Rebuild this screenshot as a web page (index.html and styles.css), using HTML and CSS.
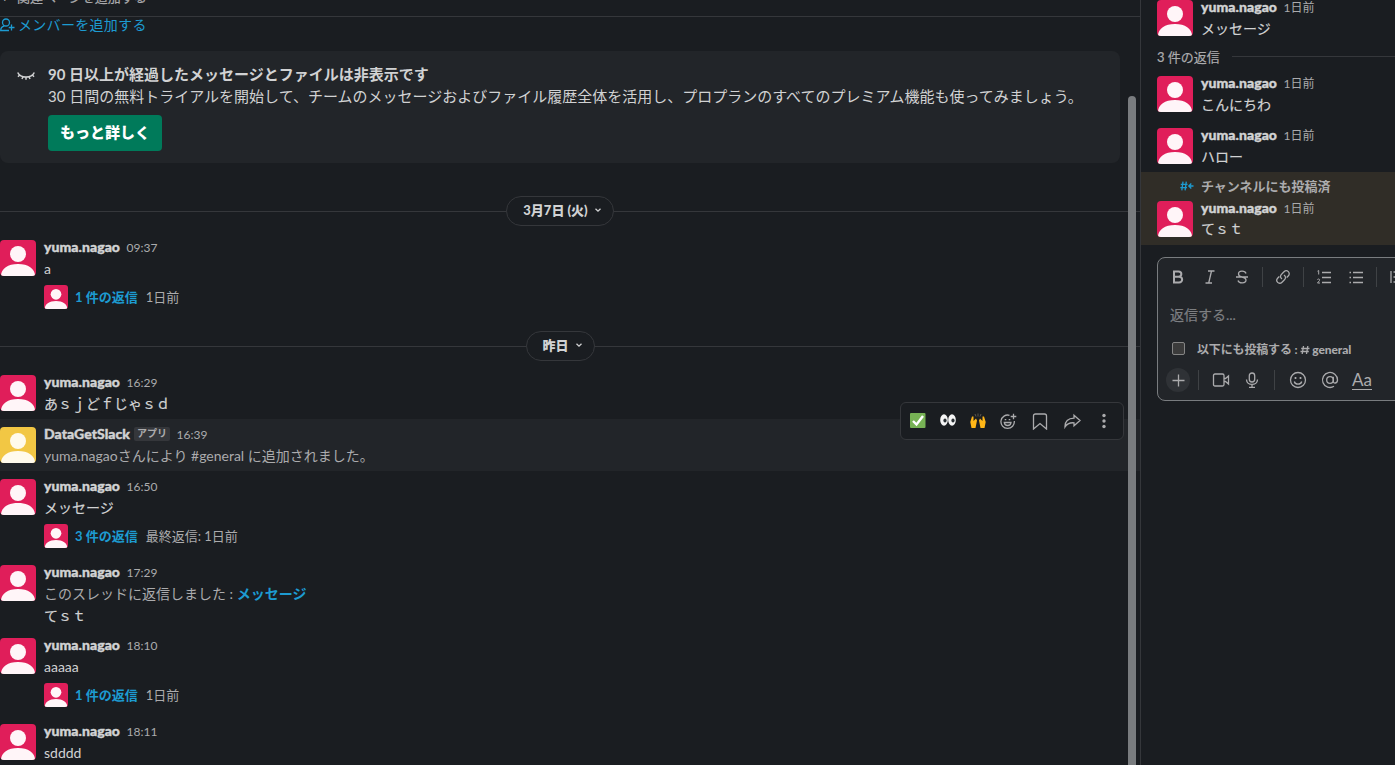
FILE: index.html
```html
<!DOCTYPE html>
<html lang="ja">
<head>
    <meta charset="UTF-8">
    <meta name="viewport" content="width=device-width, initial-scale=1.0">
    <title>general | Slack</title>
    <link rel="stylesheet" href="styles.css">
</head>
<body>
    <!-- 共通アイコン -->
    <svg class="sprite" width="0" height="0">
        <symbol id="user" viewBox="0 0 36 36">
            <circle cx="18" cy="14" r="8"/>
            <path d="M1 36C1 28.500 8 24 18 24S35 28.500 35 36z"/>
        </symbol>
        <symbol id="chevron" viewBox="0 0 8 8">
            <path d="M1.500 2.700L4 5.200L6.500 2.700"/>
        </symbol>
    </svg>

    <div class="app">
        <!-- チャンネル -->
        <main class="channel">
            <div class="bookmark"><span class="plus">+</span>関連ページを追加する</div>
            <a class="add-member">
                <svg class="icon" width="15" height="14" viewBox="0 0 15 14"><circle cx="6" cy="4.500" r="3.500"/><path d="M4.300 8C1.500 8.700 .7 10.300 .7 12.500H9M11.500 6.500V12.500M8.700 9.500H14.500"/></svg>
                <span>メンバーを追加する</span>
            </a>

            <section class="banner">
                <svg class="icon eye" width="18" height="10" viewBox="0 0 18 10"><path d="M.7 1.500C3.500 7.500 14.500 7.500 17.300 1.500M2.800 3.800L1 5.800M6 5.500L5 8M9 6V8.700M12 5.500L13 8M15.200 3.800L17 5.800"/></svg>
                <div>
                    <h2 class="t-banner-title">90 日以上が経過したメッセージとファイルは非表示です</h2>
                    <p class="t-banner">30 日間の無料トライアルを開始して、チームのメッセージおよびファイル履歴全体を活用し、プロプランのすべてのプレミアム機能も使ってみましょう。</p>
                    <button class="more">もっと詳しく</button>
                </div>
            </section>

            <div class="day"><button class="day-pill">3月7日 (火)<svg class="icon" width="8" height="8"><use href="#chevron"/></svg></button></div>

            <article class="message">
                <svg class="avatar"><use href="#user"/></svg>
                <div class="body">
                    <div class="head"><b>yuma.nagao</b><time>09:37</time></div>
                    <p>a</p>
                    <div class="replies"><svg class="avatar small"><use href="#user"/></svg><a>1 件の返信</a><span>1日前</span></div>
                </div>
            </article>

            <div class="day"><button class="day-pill">昨日<svg class="icon" width="8" height="8"><use href="#chevron"/></svg></button></div>

            <article class="message">
                <svg class="avatar"><use href="#user"/></svg>
                <div class="body">
                    <div class="head"><b>yuma.nagao</b><time>16:29</time></div>
                    <p class="kana">あｓｊどｆじゃｓｄ</p>
                </div>
            </article>

            <article class="message hovered">
                <svg class="avatar yellow"><use href="#user"/></svg>
                <div class="body">
                    <div class="head"><b>DataGetSlack</b><span class="badge">アプリ</span><time>16:39</time></div>
                    <p class="muted">yuma.nagaoさんにより #general に追加されました。</p>
                </div>

                <!-- ホバー時のアクション -->
                <div class="actions">
                    <svg width="16" height="16" viewBox="0 0 16 16"><rect width="15.500" height="15" rx="1" fill="#77b255"/><path d="M3 8L6.500 11.500L13 3" fill="none" stroke="#fff" stroke-width="2.400"/></svg>
                    <svg width="16" height="16" viewBox="0 0 16 16"><ellipse cx="4" cy="7" rx="3.800" ry="5.700" fill="#f5f5f5"/><ellipse cx="12" cy="7" rx="3.800" ry="5.700" fill="#f5f5f5"/><ellipse cx="5" cy="7.500" rx="1.600" ry="2" fill="#292f33"/><ellipse cx="13" cy="7.500" rx="1.600" ry="2" fill="#292f33"/></svg>
                    <svg width="16" height="16" viewBox="0 0 16 16"><path d="M1.500 15L.3 9L2 3.500L3.500 3.500L3.500 8L6 5.500L7 7.500L5.500 15zM14.500 15L15.700 9L14 3.500L12.500 3.500L12.500 8L10 5.500L9 7.500L10.500 15z" fill="#ffb617"/><path d="M8 .5V3.500M5 1L6 3.500M11 1L10 3.500" fill="none" stroke="#6b6459" stroke-width=".8"/></svg>
                    <svg class="icon" width="17" height="17" viewBox="0 0 17 17"><path d="M9.500 2.300A6.700 6.700 0 1 0 14.300 8M13.500 .7V6.300M10.700 3.500H16.300M4.300 9.500C4.600 13.500 10.700 13.500 11 9.500z"/><path d="M5.500 6V7.300M9.500 6V7.300" stroke-width="1.600"/></svg>
                    <svg class="icon" width="16" height="17" viewBox="0 0 16 17"><path d="M1.500 16V3Q1.500 1 3.500 1H12.500Q14.500 1 14.500 3V16L8 10.500z"/></svg>
                    <svg class="icon" width="17" height="16" viewBox="0 0 17 16"><path d="M10 2.200L16 7.500L10 12.800V9.800C5.500 9.500 3 10.500 1 14C.8 8.500 4 5.200 10 5.200z"/></svg>
                    <svg width="16" height="16" viewBox="0 0 16 16" fill="#ababad"><circle cx="8" cy="2.500" r="1.700"/><circle cx="8" cy="8" r="1.700"/><circle cx="8" cy="13.500" r="1.700"/></svg>
                </div>
            </article>

            <article class="message">
                <svg class="avatar"><use href="#user"/></svg>
                <div class="body">
                    <div class="head"><b>yuma.nagao</b><time>16:50</time></div>
                    <p class="kana">メッセージ</p>
                    <div class="replies"><svg class="avatar small"><use href="#user"/></svg><a>3 件の返信</a><span>最終返信: 1日前</span></div>
                </div>
            </article>

            <article class="message">
                <svg class="avatar"><use href="#user"/></svg>
                <div class="body">
                    <div class="head"><b>yuma.nagao</b><time>17:29</time></div>
                    <p class="muted broadcast">このスレッドに返信しました : <a>メッセージ</a></p>
                    <p class="kana">てｓｔ</p>
                </div>
            </article>

            <article class="message">
                <svg class="avatar"><use href="#user"/></svg>
                <div class="body">
                    <div class="head"><b>yuma.nagao</b><time>18:10</time></div>
                    <p>aaaaa</p>
                    <div class="replies"><svg class="avatar small"><use href="#user"/></svg><a>1 件の返信</a><span>1日前</span></div>
                </div>
            </article>

            <article class="message">
                <svg class="avatar"><use href="#user"/></svg>
                <div class="body">
                    <div class="head"><b>yuma.nagao</b><time>18:11</time></div>
                    <p>sdddd</p>
                </div>
            </article>

            <div class="scrollbar"></div>
        </main>

        <!-- スレッド -->
        <aside class="thread">
            <article class="message">
                <svg class="avatar"><use href="#user"/></svg>
                <div class="body">
                    <div class="head"><b>yuma.nagao</b><time>1日前</time></div>
                    <p class="kana">メッセージ</p>
                </div>
            </article>
            <div class="reply-count">3 件の返信</div>
            <article class="message">
                <svg class="avatar"><use href="#user"/></svg>
                <div class="body">
                    <div class="head"><b>yuma.nagao</b><time>1日前</time></div>
                    <p class="kana">こんにちわ</p>
                </div>
            </article>
            <article class="message">
                <svg class="avatar"><use href="#user"/></svg>
                <div class="body">
                    <div class="head"><b>yuma.nagao</b><time>1日前</time></div>
                    <p class="kana">ハロー</p>
                </div>
            </article>
            <div class="highlight">
                <div class="also-sent">
                    <svg class="icon" width="14" height="10" viewBox="0 0 14 10"><path d="M3 .7L1.800 9.300M6.300 .7L5.100 9.300M.8 3.300H7.500M.3 6.700H7M13.500 5H9M11.300 2.500L8.800 5L11.300 7.500"/></svg>
                    <span>チャンネルにも投稿済</span>
                </div>
                <article class="message">
                    <svg class="avatar"><use href="#user"/></svg>
                    <div class="body">
                        <div class="head"><b>yuma.nagao</b><time>1日前</time></div>
                        <p class="kana">てｓｔ</p>
                    </div>
                </article>
            </div>

            <!-- 返信フォーム -->
            <div class="composer">
                <div class="tools format">
                    <svg class="icon bold" width="16" height="16" viewBox="0 0 16 16"><path d="M4 2.500H8.500C12.300 2.500 12.300 7.700 8.500 7.700H4zM4 7.700H9C13.200 7.700 13.200 13.500 9 13.500H4z"/></svg>
                    <svg class="icon" width="16" height="16" viewBox="0 0 16 16"><path d="M6 2H12.500M3.500 14H10M9.500 2L6.700 14"/></svg>
                    <svg class="icon" width="16" height="16" viewBox="0 0 16 16"><path d="M2 8H14M12 4.500C11 1.300 4.500 1.300 4.500 5C4.500 6.800 6 7.500 8 8C10.500 8.600 12 9.300 12 11C12 14.700 5 14.700 4 11.500"/></svg>
                    <i class="sep"></i>
                    <svg class="icon" width="16" height="16" viewBox="0 0 16 16"><path d="M7 10C4.500 8 5.500 6.200 7 4.800L9 2.800C12 -.2 16.200 4 13.200 7L11.700 8.500M9 6C11.500 8 10.500 9.800 9 11.200L7 13.200C4 16.200 -.2 12 2.800 9L4.300 7.500"/></svg>
                    <i class="sep"></i>
                    <svg class="icon" width="16" height="16" viewBox="0 0 16 16"><path d="M6 3.500H15M6 8.500H15M6 13.500H15"/><path d="M1.500 2.200L2.700 1.500V5.500M1.300 10.700C2 9.500 4.300 10 3.500 11.500L1.500 14H4" stroke-width="1"/></svg>
                    <svg class="icon" width="16" height="16" viewBox="0 0 16 16"><path d="M5 3.500H15M5 8.500H15M5 13.500H15M1.500 3.500H3M1.500 8.500H3M1.500 13.500H3"/></svg>
                    <i class="sep"></i>
                    <svg class="icon" width="16" height="16" viewBox="0 0 16 16"><path d="M2 2V14M4.500 3H14M4.500 8H14M4.500 13H14"/></svg>
                </div>
                <div class="placeholder">返信する...</div>
                <label class="also"><span class="checkbox"></span><span class="also-label">以下にも投稿する : <svg class="icon" width="10" height="10" viewBox="0 0 10 10"><path d="M3.500 1L2.200 9M7.800 1L6.500 9M1.200 3.500H9.500M.5 6.500H8.800"/></svg><b>general</b></span></label>
                <div class="tools bottom">
                    <span class="add"><svg class="icon" width="16" height="16" viewBox="0 0 16 16"><path d="M8.500 2.500V14.500M2.500 8.500H14.500"/></svg></span>
                    <i class="sep"></i>
                    <svg class="icon" width="18" height="16" viewBox="0 0 18 16"><path d="M1.500 3.500Q1.500 2 3 2H10.500Q12 2 12 3.500V12.500Q12 14 10.500 14H3Q1.500 14 1.500 12.500zM12 6.500H13.500L16.500 4V12L13.500 9.500H12"/></svg>
                    <svg class="icon" width="16" height="16" viewBox="0 0 16 16"><rect x="5.300" y="1" width="5.400" height="9" rx="2.700"/><path d="M2.500 7.500C2.500 14 13.500 14 13.500 7.500M8 12.500V15.500M5 15.300H11"/></svg>
                    <i class="sep"></i>
                    <svg class="icon" width="18" height="18" viewBox="0 0 18 18"><circle cx="9" cy="9" r="7.500"/><path d="M5.300 10.500C6 14 12 14 12.700 10.500"/><path d="M6.500 6V8M11.500 6V8" stroke-width="1.700"/></svg>
                    <svg class="icon" width="18" height="18" viewBox="0 0 18 18"><circle cx="9" cy="9" r="3.300"/><path d="M12.300 5.800V10.500C12.300 13 16.500 12.500 16.500 9A7.500 7.500 0 1 0 13 15.300"/></svg>
                    <span class="aa">Aa</span>
                </div>
            </div>
        </aside>
    </div>
</body>
</html>
```
FILE: styles.css
```css
* {
    margin: 0;
    padding: 0;
    box-sizing: border-box;
}

body {
    background: #1a1d21;
    color: #d1d2d3;
    font-family: Lato, "Noto Sans CJK JP", sans-serif;
    font-size: 14px;
    line-height: 22px;
    overflow: hidden;
}

button {
    font: inherit;
    color: inherit;
    border: none;
}

svg {
    flex: none;
    display: block;
}

.sprite {
    position: absolute;
}

.icon {
    fill: none;
    stroke: currentColor;
    stroke-width: 1.3;
}

.app {
    display: flex;
    height: 765px;
    width: 1395px;
    overflow: hidden;
}

/* ========= チャンネル ========= */
.channel {
    position: relative;
    width: 1141px;
    flex: none;
    border-right: 1px solid #35373b;
}

.bookmark {
    height: 31px;
    margin: -14px 0 -3px;
    border-bottom: 1px solid #35373b;
    color: #ababad;
    font-size: 13px;
    -webkit-text-stroke: 0.2px;
}

.plus {
    display: inline-block;
    width: 17px;
    padding-left: 1px;
}

.add-member {
    display: flex;
    align-items: center;
    gap: 3px;
    height: 22px;
    margin-bottom: 15px;
    color: #1d9bd1;
    letter-spacing: 0.3px;
}

.banner {
    display: flex;
    width: 1120px;
    height: 112px;
    margin-bottom: 20px;
    padding: 12px 16px;
    gap: 12px;
    background: #222529;
    border-radius: 8px;
    font-size: 15px;
}

.eye {
    margin: 8px 1px 0;
    stroke-width: 1.5;
}

.t-banner-title {
    font-size: 15px;
    font-weight: 700;
}

.t-banner {
    white-space: nowrap;
}

.more {
    height: 36px;
    margin-top: 8px;
    padding: 0 12px 2px;
    border-radius: 4px;
    background: #007a5a;
    color: #fff;
    font-weight: 900;
}

.day {
    display: flex;
    align-items: center;
    height: 49px;
    padding-top: 7px;
}

.day::before,
.day::after {
    content: "";
    flex: 1;
    height: 1px;
    background: #35373b;
}

.day::after {
    flex: 1 0 20px;
}

.day-pill {
    display: flex;
    align-items: center;
    gap: 6px;
    height: 30px;
    padding: 0 11px 2px 16px;
    border: 1px solid #35373b;
    border-radius: 15px;
    background: #1a1d21;
    font-size: 13px;
    font-weight: 900;
}

/* ========= メッセージ ========= */
.message {
    position: relative;
    display: flex;
    gap: 8px;
    padding: 4px 0;
}

.hovered {
    background: #222529;
}

.avatar {
    width: 36px;
    height: 36px;
    margin-top: 4px;
    border-radius: 4px;
    background: #e01e5a;
    fill: #fff5f8;
}

.avatar.yellow {
    background: #f2c744;
    fill: #fffaec;
}

.avatar.small {
    width: 24px;
    height: 24px;
    margin: 0 7px 0 0;
    border-radius: 3px;
}

.head {
    display: flex;
    height: 22px;
}

.head b {
    font-weight: 900;
    letter-spacing: 0.05px;
    -webkit-text-stroke: 0.4px;
}

.head time {
    margin-left: 6.5px;
    font-size: 12px;
    line-height: 23px;
    color: #ababad;
}

.message p {
    height: 22px;
    white-space: nowrap;
}

.message p.broadcast {
    height: 22px;
    line-height: 21px;
}

.message .kana {
    height: 21px;
    line-height: 21px;
    margin-bottom: 1px;
    -webkit-text-stroke: 0.2px;
}

.broadcast + .kana {
    margin-bottom: 0;
}

.muted {
    color: #ababad;
}

.broadcast a {
    color: #1d9bd1;
    font-weight: 700;
}

.badge {
    height: 14px;
    margin: 4px 0 0 4px;
    padding: 0 3px;
    border-radius: 2px;
    background: #35373b;
    color: #ababad;
    font-size: 10px;
    font-weight: 700;
    line-height: 13px;
}

.replies {
    display: flex;
    align-items: center;
    height: 34px;
    font-size: 13px;
    line-height: 21px;
}

.replies a {
    color: #1d9bd1;
    font-weight: 700;
}

.replies span {
    margin-left: 8px;
    color: #ababad;
}

/* 行の右上に重なるツールバー */
.actions {
    position: absolute;
    top: -17px;
    right: 16px;
    display: flex;
    align-items: center;
    gap: 14px;
    width: 224px;
    height: 38px;
    padding-left: 8.5px;
    border: 1px solid #35373b;
    border-radius: 6px;
    background: #1a1d21;
    color: #ababad;
}

.actions .icon {
    margin-right: 1.5px;
}

.scrollbar {
    position: absolute;
    top: 96px;
    right: 4px;
    width: 8px;
    height: 680px;
    border-radius: 4px;
    background: #797c7f;
}

/* ========= スレッド ========= */
.thread {
    flex: 1;
    min-width: 0;
    margin-top: -8px;
}

.thread .message {
    padding-left: 16px;
}

.thread .head time {
    line-height: 24px;
}

.reply-count {
    display: flex;
    align-items: center;
    gap: 12px;
    height: 24px;
    padding: 1px 0 0 16px;
    color: #ababad;
    font-size: 13px;
    -webkit-text-stroke: 0.2px;
}

.reply-count::after {
    content: "";
    flex: 1;
    height: 1px;
    background: #35373b;
}

.highlight {
    padding-top: 4px;
    background: #302d27;
}

.highlight .message {
    padding-top: 0;
}

.highlight .kana {
    line-height: 20px;
}

.also-sent {
    display: flex;
    align-items: center;
    gap: 7px;
    height: 21px;
    padding: 0 0 2px 39px;
    color: #ababad;
    font-size: 13px;
    font-weight: 700;
}

.also-sent svg {
    color: #1d9bd1;
}

.composer {
    width: 400px;
    height: 144px;
    margin: 12px 0 0 16px;
    border: 1px solid #797c7f;
    border-radius: 8px;
    background: #222529;
    color: #ababad;
}

.tools {
    display: flex;
    align-items: center;
}

.format {
    height: 38px;
    padding-left: 12px;
    gap: 16px;
}

.format .bold {
    stroke-width: 2;
}

.sep {
    width: 1px;
    height: 20px;
    background: #3f4245;
}

.format .sep {
    margin: 0 -4px;
}

.placeholder {
    height: 36px;
    padding-left: 12px;
    line-height: 37px;
    color: #7d7f82;
    -webkit-text-stroke: 0.2px;
}

.also {
    display: flex;
    align-items: center;
    gap: 12px;
    height: 34px;
    padding: 0 0 1px 14px;
    font-size: 12px;
    font-weight: 700;
}

.also-label {
    display: flex;
    align-items: center;
    padding-top: 2px;
    white-space: pre;
    letter-spacing: -0.15px;
}

.also-label b {
    margin-left: 2px;
    font-weight: 900;
    letter-spacing: -0.1px;
}

.checkbox {
    width: 13px;
    height: 13px;
    border: 1px solid #858585;
    border-radius: 2px;
    background: #3b3b3b;
}

.bottom {
    height: 28px;
    padding-left: 8px;
    gap: 14px;
}

.add {
    display: grid;
    place-items: center;
    width: 24px;
    height: 24px;
    border-radius: 50%;
    background: #2f3236;
}

.bottom .sep {
    margin: 0 -1px 0 -6px;
}

.bottom .sep ~ .sep {
    margin: 0 -1px 0 0;
}

.bottom .sep ~ .sep ~ .icon {
    margin: 0 -0.5px 0 0.5px;
}

.aa {
    border-bottom: 1px solid #ababad;
    font-size: 17px;
    line-height: 19px;
    margin-left: -0.5px;
    padding: 0 0.5px;
}
```
